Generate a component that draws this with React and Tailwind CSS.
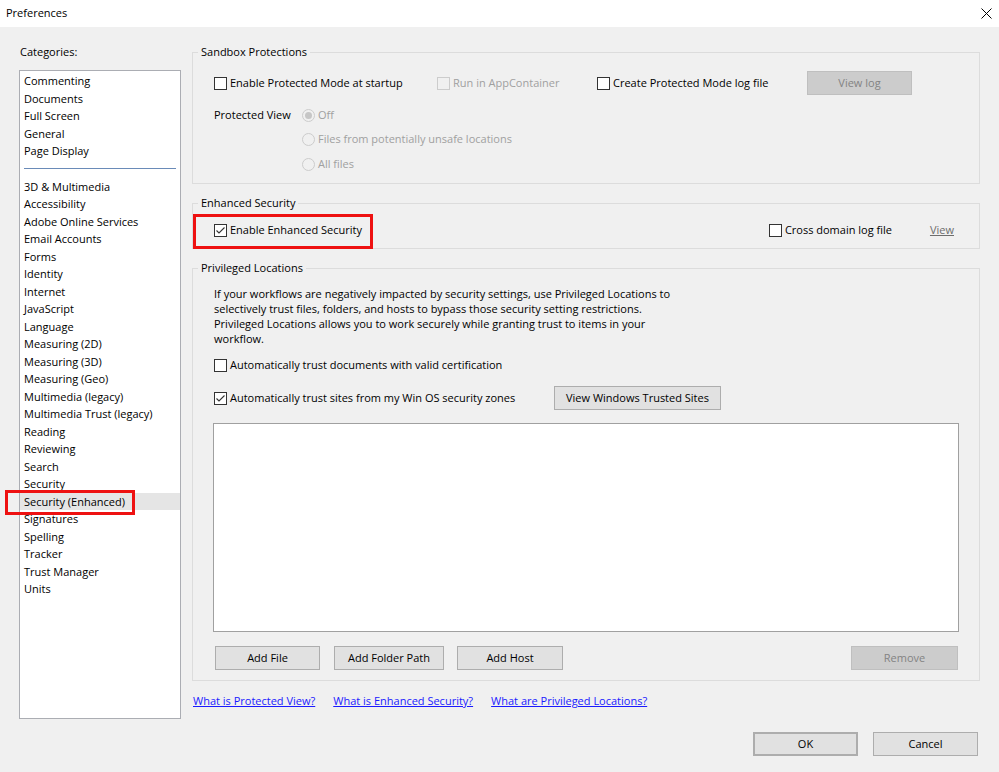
import React from 'react';

const font = { fontFamily: '"Open Sans", "Noto Sans", sans-serif' };

const Check = ({ checked, disabled }) => (
    <span
        className={
            'w-[13px] h-[13px] border flex items-center justify-center shrink-0 ' +
            (disabled ? 'border-[#cccccc] bg-[#f0f0f0]' : 'border-[#333333] bg-white')
        }
    >
        {checked && (
            <svg width="11" height="11" viewBox="0 0 11 11" fill="none">
                <path d="M1.5 5.5 L4 8 L9.5 2.5" stroke="#333333" strokeWidth="1.1" />
            </svg>
        )}
    </span>
);

const CheckRow = ({ label, checked, disabled, className = '' }) => (
    <label className={'flex items-center gap-[3px] ' + className}>
        <Check checked={checked} disabled={disabled} />
        <span className={disabled ? 'text-[#a0a0a0]' : 'text-black'}>{label}</span>
    </label>
);

const Radio = ({ label, selected }) => (
    <div className="flex items-center gap-[3px] h-full">
        <span className="w-[13px] h-[13px] rounded-full border border-[#cccccc] bg-[#f0f0f0] flex items-center justify-center">
            {selected && <span className="w-[7px] h-[7px] rounded-full bg-[#c6c6c6]" />}
        </span>
        <span className="text-[#a0a0a0]">{label}</span>
    </div>
);

const Button = ({ children, disabled, className = '' }) => (
    <button
        className={
            'h-[24px] border flex items-center justify-center ' +
            (disabled
                ? 'bg-[#cccccc] border-[#bfbfbf] text-[#838383]'
                : 'bg-[#e1e1e1] border-[#adadad] text-black') +
            ' ' +
            className
        }
    >
        {children}
    </button>
);

const Group = ({ title, children, className = '' }) => (
    <fieldset className={'border border-[#dcdcdc] px-0 ' + className}>
        <legend className="ml-[5px] px-[3px] leading-[16px]">{title}</legend>
        {children}
    </fieldset>
);

const topCategories = ['Commenting', 'Documents', 'Full Screen', 'General', 'Page Display'];
const categories = [
    '3D & Multimedia',
    'Accessibility',
    'Adobe Online Services',
    'Email Accounts',
    'Forms',
    'Identity',
    'Internet',
    'JavaScript',
    'Language',
    'Measuring (2D)',
    'Measuring (3D)',
    'Measuring (Geo)',
    'Multimedia (legacy)',
    'Multimedia Trust (legacy)',
    'Reading',
    'Reviewing',
    'Search',
    'Security',
    'Security (Enhanced)',
    'Signatures',
    'Spelling',
    'Tracker',
    'Trust Manager',
    'Units',
];

const CategoryRow = ({ name }) => {
    const selected = name === 'Security (Enhanced)';
    return (
        <div
            className={
                'relative h-[17.5px] leading-[17.5px] pl-[4px] whitespace-nowrap ' +
                (selected ? 'bg-[#e5e5e5]' : '')
            }
        >
            {name}
            {selected && (
                <span className="absolute left-[-15px] top-[-3px] w-[130px] h-[25px] border-[3px] border-[#ee1111]" />
            )}
        </div>
    );
};

export default function App() {
    return (
        <div className="w-[999px] h-[772px] bg-[#f0f0f0] flex flex-col text-[11px] text-black overflow-hidden" style={font}>
            {/* title bar */}
            <div className="h-[27px] bg-white flex items-center justify-between pl-[6px] pr-[7px]">
                <span>Preferences</span>
                <svg width="11" height="11" viewBox="0 0 11 11">
                    <path d="M0.5 0.5 L10.5 10.5 M10.5 0.5 L0.5 10.5" stroke="#000" strokeWidth="1" />
                </svg>
            </div>

            <div className="flex pl-[19px] pt-[17px]">
                {/* categories */}
                <div className="w-[162px] shrink-0">
                    <div className="h-[16px] leading-[16px] pl-[1px]">Categories:</div>
                    <div className="mt-[10px] h-[649px] bg-white border border-[#abadb3] pt-[1px]">
                        {topCategories.map((c) => (
                            <CategoryRow key={c} name={c} />
                        ))}
                        <div className="h-[18px] flex items-center px-[4px]">
                            <div className="h-px w-full bg-[#6a8bb8]" />
                        </div>
                        {categories.map((c) => (
                            <CategoryRow key={c} name={c} />
                        ))}
                    </div>
                </div>

                {/* settings */}
                <div className="w-[788px] ml-[11px] shrink-0">
                    <Group title="Sandbox Protections" className="h-[140px]">
                        <div className="mt-[11px] pl-[21px] h-[24px] flex items-center">
                            <CheckRow label="Enable Protected Mode at startup" className="w-[223px]" />
                            <CheckRow label="Run in AppContainer" disabled className="w-[160px]" />
                            <CheckRow label="Create Protected Mode log file" className="w-[210px]" />
                            <Button disabled className="w-[105px]">View log</Button>
                        </div>
                        <div className="mt-[8px] pl-[21px] flex">
                            <div className="w-[88px] h-[24px] leading-[24px]">Protected View</div>
                            <div className="flex flex-col">
                                <div className="h-[24px]"><Radio label="Off" selected /></div>
                                <div className="h-[25px]"><Radio label="Files from potentially unsafe locations" /></div>
                                <div className="h-[24px]"><Radio label="All files" /></div>
                            </div>
                        </div>
                    </Group>

                    <Group title="Enhanced Security" className="mt-[11px] h-[54px]">
                        <div className="relative mt-[7px] h-[24px] pl-[21px] pr-[25px] flex items-center">
                            <span className="absolute left-0 top-[-4px] w-[180px] h-[35px] border-[3px] border-[#ee1111]" />
                            <CheckRow label="Enable Enhanced Security" checked className="flex-1" />
                            <CheckRow label="Cross domain log file" />
                            <span className="ml-[38px] text-[#6d6d6d] underline">View</span>
                        </div>
                    </Group>

                    <Group title="Privileged Locations" className="mt-[11px] h-[421px]">
                        <div className="pl-[21px] pr-[20px]">
                            <p className="mt-[10px] leading-[15px]">
                                If your workflows are negatively impacted by security settings, use Privileged Locations to
                                <br />
                                selectively trust files, folders, and hosts to bypass those security setting restrictions.
                                <br />
                                Privileged Locations allows you to work securely while granting trust to items in your
                                <br />
                                workflow.
                            </p>
                            <div className="mt-[9px] h-[20px] flex items-center">
                                <CheckRow label="Automatically trust documents with valid certification" />
                            </div>
                            <div className="mt-[11px] h-[24px] flex items-center">
                                <CheckRow label="Automatically trust sites from my Win OS security zones" checked className="w-[340px]" />
                                <Button className="w-[167px]">View Windows Trusted Sites</Button>
                            </div>
                            <div className="mt-[13px] ml-[-1px] h-[209px] bg-white border border-[#a0a0a0]" />
                            <div className="mt-[14px] flex items-center">
                                <Button className="w-[105px] ml-[1px]">Add File</Button>
                                <Button className="w-[110px] ml-[14px]">Add Folder Path</Button>
                                <Button className="w-[106px] ml-[13px]">Add Host</Button>
                                <Button disabled className="w-[107px] ml-auto mr-[1px]">Remove</Button>
                            </div>
                        </div>
                    </Group>

                    <div className="mt-[12px] h-[16px] leading-[16px] flex gap-[18px] pl-[1px] text-[#1a1aff] underline">
                        <span>What is Protected View?</span>
                        <span>What is Enhanced Security?</span>
                        <span>What are Privileged Locations?</span>
                    </div>
                </div>
            </div>

            <div className="mt-[13px] flex justify-end gap-[15px] pr-[21px]">
                <Button className="w-[105px] border-2 border-[#0078d7]">OK</Button>
                <Button className="w-[105px]">Cancel</Button>
            </div>
        </div>
    );
}
